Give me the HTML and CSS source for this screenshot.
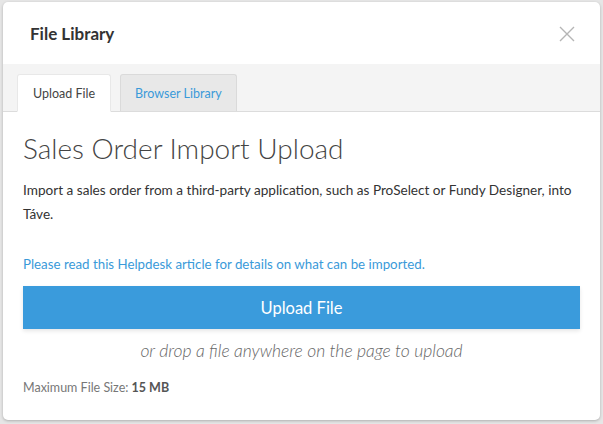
FILE: index.html
```html
<!DOCTYPE html>
<html>
<head>
<meta charset="utf-8">
<link rel="stylesheet" href="styles.css">
</head>
<body>
<div class="modal">
  <div class="modal-header">
    <h1 class="modal-title">File Library</h1>
    <span class="close">
      <svg width="16" height="16" viewBox="0 0 16 16"><path d="M1 1L15 15M15 1L1 15" stroke="#b5b5b5" stroke-width="1.4" fill="none"/></svg>
    </span>
  </div>
  <div class="tabs">
    <div class="tab active">Upload File</div>
    <div class="tab">Browser Library</div>
  </div>
  <div class="content">
    <h2 class="heading">Sales Order Import Upload</h2>
    <p class="desc">Import a sales order from a third-party application, such as ProSelect or Fundy Designer, into Táve.</p>
    <p class="help"><a href="#">Please read this Helpdesk article for details on what can be imported.</a></p>
    <div class="upload-btn">Upload File</div>
    <p class="drop">or drop a file anywhere on the page to upload</p>
    <p class="max">Maximum File Size: <b>15 MB</b></p>
  </div>
</div>
</body>
</html>
```
FILE: styles.css
```css
html, body {
  margin: 0;
  height: 100%;
}
body {
  background: #e6e6e6;
  padding: 2px 3px 0 3px;
  box-sizing: border-box;
  font-family: Lato, "Open Sans", sans-serif;
  overflow: hidden;
}
.modal {
  background: #fff;
  height: 418px;
  border-radius: 5px;
  box-shadow: 0 1px 3px rgba(0,0,0,0.25);
  overflow: hidden;
  display: flex;
  flex-direction: column;
}
.modal-header {
  height: 62px;
  display: flex;
  align-items: center;
  justify-content: space-between;
  padding: 0 25px 0 27px;
}
.modal-title {
  margin: 0;
  font-size: 17px;
  font-weight: 700;
  color: #333;
}
.close {
  display: flex;
  margin-top: 2px;
}
.tabs {
  background: #f4f4f4;
  border-bottom: 1px solid #dcdcdc;
  height: 37px;
  padding: 10px 0 0 14px;
  display: flex;
  align-items: flex-end;
  gap: 9px;
}
.tab {
  height: 37px;
  box-sizing: border-box;
  padding: 0 15px;
  display: flex;
  align-items: center;
  font-size: 12.5px;
  border-radius: 3px 3px 0 0;
  margin-bottom: -1px;
}
.tab.active {
  background: #fff;
  color: #444;
  border: 1px solid #e8e8e8;
  border-bottom: 1px solid #fff;
  height: 38px;
  padding: 0 15px;
}
.tab:not(.active) {
  background: #e8e8e8;
  color: #3a9ad9;
  border: 1px solid #dadada;
  border-bottom: none;
  margin-bottom: 0;
  padding: 0 14px;
}
.content {
  padding: 18px 20px 0 20px;
}
.heading {
  margin: 0;
  font-size: 28px;
  font-weight: 300;
  color: #444;
  line-height: 36px;
}
.desc {
  margin: 12px 0 0;
  font-size: 13.6px;
  line-height: 24px;
  color: #333;
}
.help {
  margin: 26px 0 0;
  font-size: 13.3px;
  line-height: 24px;
}
.help a {
  color: #3a9ad9;
  text-decoration: none;
}
.upload-btn {
  margin-top: 10px;
  height: 43px;
  background: #3a9bdc;
  color: #fff;
  font-size: 16.5px;
  display: flex;
  align-items: center;
  justify-content: center;
  box-shadow: 0 2px 4px rgba(0,0,0,0.1);
}
.drop {
  margin: 10px 0 0;
  text-align: center;
  font-style: italic;
  font-weight: 300;
  font-size: 17.5px;
  line-height: 24px;
  color: #666;
}
.max {
  margin: 15px 0 0;
  font-size: 12.5px;
  line-height: 20px;
  color: #777;
}
.max b {
  color: #555;
}
```
